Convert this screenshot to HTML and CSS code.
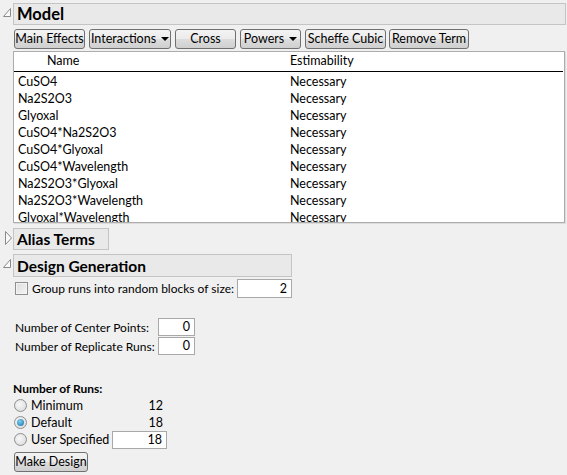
FILE: index.html
```html
<!DOCTYPE html>
<html>
<head>
<meta charset="utf-8">
<link rel="stylesheet" href="styles.css">
</head>
<body>
<div class="page">
  <section class="outline">
    <div class="disc"><svg width="10" height="22" viewBox="0 0 10 22"><polygon points="7.5,5.5 7.5,13.5 0.5,13.5" class="tri"/></svg></div>
    <div class="title-box title-model"><h2>Model</h2></div>
    <div class="body">
      <div class="btn-row">
        <button class="btn w-main">Main Effects</button>
        <button class="btn w-inter">Interactions <span class="caret"></span></button>
        <button class="btn w-cross">Cross</button>
        <button class="btn w-powers">Powers <span class="caret"></span></button>
        <button class="btn w-scheffe">Scheffe Cubic</button>
        <button class="btn w-remove">Remove Term</button>
      </div>
      <div class="table">
        <div class="thead">
          <div class="th th-name">Name</div>
          <div class="th">Estimability</div>
        </div>
        <div class="tbody">
          <div class="tr"><div class="td">CuSO4</div><div class="td">Necessary</div></div>
          <div class="tr"><div class="td">Na2S2O3</div><div class="td">Necessary</div></div>
          <div class="tr"><div class="td">Glyoxal</div><div class="td">Necessary</div></div>
          <div class="tr"><div class="td">CuSO4*Na2S2O3</div><div class="td">Necessary</div></div>
          <div class="tr"><div class="td">CuSO4*Glyoxal</div><div class="td">Necessary</div></div>
          <div class="tr"><div class="td">CuSO4*Wavelength</div><div class="td">Necessary</div></div>
          <div class="tr"><div class="td">Na2S2O3*Glyoxal</div><div class="td">Necessary</div></div>
          <div class="tr"><div class="td">Na2S2O3*Wavelength</div><div class="td">Necessary</div></div>
          <div class="tr"><div class="td">Glyoxal*Wavelength</div><div class="td">Necessary</div></div>
        </div>
      </div>
    </div>
  </section>

  <section class="outline outline-alias">
    <div class="disc"><svg width="10" height="22" viewBox="0 0 10 22"><polygon points="2.5,3.5 2.5,16.5 8.5,10" class="tri"/></svg></div>
    <div class="title-box title-alias"><h2>Alias Terms</h2></div>
  </section>

  <section class="outline outline-design">
    <div class="disc"><svg width="10" height="22" viewBox="0 0 10 22"><polygon points="7.5,5.5 7.5,13.5 0.5,13.5" class="tri"/></svg></div>
    <div class="title-box title-design"><h2>Design Generation</h2></div>
    <div class="body design-body">
      <div class="block-row">
        <span class="check"></span>
        <span class="block-label">Group runs into random blocks of size:</span>
        <span class="field w-block">2</span>
      </div>
      <div class="pair-grid">
        <span class="pair-label">Number of Center Points:</span>
        <span class="field w-small">0</span>
        <span class="pair-label">Number of Replicate Runs:</span>
        <span class="field w-small">0</span>
      </div>
      <div class="runs-title">Number of Runs:</div>
      <div class="runs-grid">
        <label class="radio-item"><span class="radio"></span>Minimum</label>
        <span class="runs-val">12</span>
        <label class="radio-item"><span class="radio on"></span>Default</label>
        <span class="runs-val">18</span>
        <label class="radio-item"><span class="radio"></span>User Specified</label>
        <span class="field w-user">18</span>
      </div>
      <button class="btn w-make">Make Design</button>
    </div>
  </section>
</div>
</body>
</html>
```

FILE: styles.css
```css
* { box-sizing: border-box; }
html, body { margin: 0; padding: 0; }
body {
  background: #f0f0f0;
  font-family: Lato, "Noto Sans", sans-serif;
  font-size: 12px;
  color: #000;
  white-space: nowrap;
}
.page {
  padding: 3px 0 0 3px;
}
.outline {
  display: grid;
  grid-template-columns: 10px 1fr;
  align-items: start;
}
.disc { grid-column: 1; grid-row: 1; height: 22px; }
.disc svg { display: block; }
.tri { fill: #fafafa; stroke: #8a8a8a; stroke-width: 1; }
.title-box {
  grid-column: 2;
  grid-row: 1;
  height: 22px;
  border: 1px solid #c4c4c4;
  background: #e9e9e9;
  padding-left: 3px;
  display: flex;
  align-items: center;
}
.title-box h2 {
  margin: 0;
  font-size: 15.5px;
  font-weight: bold;
  line-height: 20px;
}
.title-model h2 { font-size: 16.5px; }
.title-model { margin-right: 1px; }
.title-alias { width: 96px; }
.title-design { width: 279px; height: 23px; }
.body { grid-column: 2; }

.btn-row {
  display: flex;
  gap: 4px;
  margin: 4px 0 0 1px;
}
.btn {
  font: inherit;
  font-size: 12.5px;
  white-space: nowrap;
  height: 20px;
  padding: 0 2px;
  border: 1px solid #707070;
  border-radius: 3px;
  background: linear-gradient(#f3f3f3, #ebebeb 50%, #dddddd 51%, #cfcfcf);
  color: #000;
  display: inline-flex;
  align-items: center;
  justify-content: center;
  line-height: 16px;
}
.caret {
  display: inline-block;
  margin-left: 5px;
  width: 0; height: 0;
  border-left: 4px solid transparent;
  border-right: 4px solid transparent;
  border-top: 4px solid #000;
}
.w-main { width: 71px; }
.w-inter { width: 82px; }
.w-cross { width: 61px; }
.w-powers { width: 61px; }
.w-scheffe { width: 81px; }
.w-remove { width: 80px; margin-left: -1px; }

.table {
  margin-top: 2px;
  height: 172px;
  margin-right: 2px;
  background: #fff;
  border: 1px solid #acacac;
  box-shadow: 1px 1px 0 #dcdcdc;
  overflow: hidden;
}
.thead, .tr {
  display: grid;
  grid-template-columns: 273px 1fr;
}
.thead {
  height: 20px;
  border-bottom: 1px solid #000;
  margin-right: 1px;
}
.th { line-height: 18px; padding-left: 3px; font-size: 12.5px; }
.th-name { padding-left: 33px; }
.tbody { padding-top: 1px; }
.tr { height: 17px; }
.td { line-height: 17px; padding-left: 3px; font-size: 12.5px; }
.tr .td:first-child { padding-left: 4px; }

.outline-alias { margin-top: 5px; }
.outline-design { margin-top: 4px; }

.design-body { padding-left: 2px; font-size: 12.5px; }
.block-row {
  display: flex;
  align-items: center;
  height: 19px;
  margin-top: 2px;
}
.check {
  flex: none;
  width: 13px; height: 13px;
  border: 1px solid #8e8f8f;
  background: linear-gradient(135deg, #dcdcdc, #f6f6f6);
  box-shadow: inset 0 0 0 1px #f4f4f4;
  margin-right: 4px;
}
.block-label { width: 205px; flex: none; font-size: 12px; }
.field {
  display: block;
  flex: none;
  height: 19px;
  border: 1px solid #a8a8a8;
  background: #fff;
  text-align: right;
  padding-right: 4px;
  line-height: 17px;
}
.w-block { width: 55px; }
.w-small { width: 37px; height: 18px; line-height: 16px; }
.w-user { width: 55px; height: 18px; line-height: 16px; }

.pair-grid {
  display: grid;
  grid-template-columns: 143px 37px;
  row-gap: 1px;
  align-items: center;
  margin-top: 20px;
}
.pair-label { font-size: 12px; }
.runs-title {
  font-weight: bold;
  font-size: 12px;
  margin: 26px 0 0 -2px;
  line-height: 16px;
}
.runs-grid {
  display: grid;
  grid-template-columns: 97px 55px;
  align-items: center;
  grid-auto-rows: 17px;
}
.radio-item { display: flex; align-items: center; margin-left: -1px; }
.radio {
  flex: none;
  width: 13px; height: 13px;
  border-radius: 50%;
  border: 1px solid #8e8f8f;
  background: radial-gradient(circle at 40% 40%, #f8f8f8, #d6d6d6);
  margin-right: 4px;
  position: relative;
}
.radio.on::after {
  content: "";
  position: absolute;
  left: 2px; top: 2px;
  width: 7px; height: 7px;
  border-radius: 50%;
  background: radial-gradient(circle at 40% 35%, #7ad0f0, #1b6ea8);
}
.runs-val { text-align: right; padding-right: 4px; }
.w-make { width: 74px; margin: 4px 0 0 -1px; }
```
